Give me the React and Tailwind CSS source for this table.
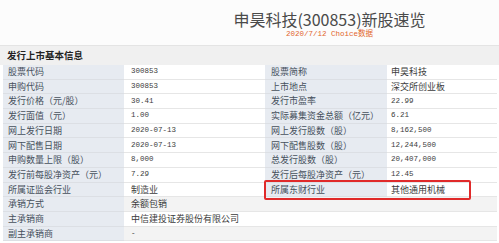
const rows = [
  ["股票代码", "300853", "股票简称", "申昊科技"],
  ["申购代码", "300853", "上市地点", "深交所创业板"],
  ["发行价格（元/股）", "30.41", "发行市盈率", "22.99"],
  ["发行面值（元）", "1.00", "实际募集资金总额（亿元）", "6.21"],
  ["网上发行日期", "2020-07-13", "网上发行股数（股）", "8,162,500"],
  ["网下配售日期", "2020-07-13", "网下配售股数（股）", "12,244,500"],
  ["申购数量上限（股）", "8,000", "总发行股数（股）", "20,407,000"],
  ["发行前每股净资产（元）", "7.29", "发行后每股净资产（元）", "12.45"],
  ["所属证监会行业", "制造业", "所属东财行业", "其他通用机械"],
  ["承销方式", "余额包销"],
  ["主承销商", "中信建投证券股份有限公司"],
  ["副主承销商", "-"],
];

const cjk = "font-['Noto_Sans_CJK_SC',sans-serif]";
const mono = "font-['Liberation_Mono','Noto_Sans_CJK_SC',monospace]";

function Value({ text }) {
  const ascii = /^[0-9.,\-]+$/.test(text);
  return <span className={ascii ? `${mono} text-[7.5px]` : `${cjk} text-[9px]`}>{text}</span>;
}

export default function App() {
  return (
    <div className="w-[499px] h-[243px] overflow-hidden bg-white text-[#3c3c3c]">
      <div className="h-[46px] pl-[160px] flex flex-col items-center border-b border-[#e4e4e4] bg-[#fcfcfc]">
        <div className={`${cjk} mt-[9px] text-[16px] leading-[21px] text-[#4a4a4a]`}>申昊科技(300853)新股速览</div>
        <div className={`${mono} text-[7.5px] leading-[9px] text-[#e2662c]`}>2020/7/12 Choice数据</div>
      </div>
      <div className={`${cjk} h-[19px] pl-[7px] flex items-center bg-[#f0f0f0] text-[9.5px] font-bold text-[#222]`}>发行上市基本信息</div>
      <div className="pl-[3px] pr-[2px] grid grid-cols-[121px_141px_122px_1fr] auto-rows-[14.7px]">
        {rows.map((r, i) => {
          const last = r.length === 2;
          const tint = last && i % 2 === 1 ? "bg-[#f3f3f3]" : "bg-white";
          return (
            <div key={i} className="contents">
              <div className={`${cjk} flex items-center pl-[5px] bg-[#e7ebf1] border-b border-[#dcdfe4] text-[9px] text-[#46505c] whitespace-nowrap`}>{r[0]}</div>
              {last ? (
                <div className={`col-span-3 flex items-center pl-[7px] ${tint} border-b border-[#e6e6e6]`}>
                  <Value text={r[1]} />
                </div>
              ) : (
                <>
                  <div className="flex items-center pl-[7px] bg-white border-b border-[#e6e6e6]">
                    <Value text={r[1]} />
                  </div>
                  <div className="relative flex items-center pl-[6px] bg-[#e7ebf1] border-b border-[#dcdfe4]">
                    <span className={`${cjk} text-[9px] text-[#46505c] whitespace-nowrap`}>{r[2]}</span>
                    {i === 8 ? (
                      <div className="absolute left-[-1px] top-[-3px] w-[207px] h-[20px] border-2 border-[#e02a2a] rounded-[2px]" />
                    ) : null}
                  </div>
                  <div className="flex items-center pl-[4px] bg-white border-b border-[#e6e6e6]">
                    <Value text={r[3]} />
                  </div>
                </>
              )}
            </div>
          );
        })}
      </div>
    </div>
  );
}
